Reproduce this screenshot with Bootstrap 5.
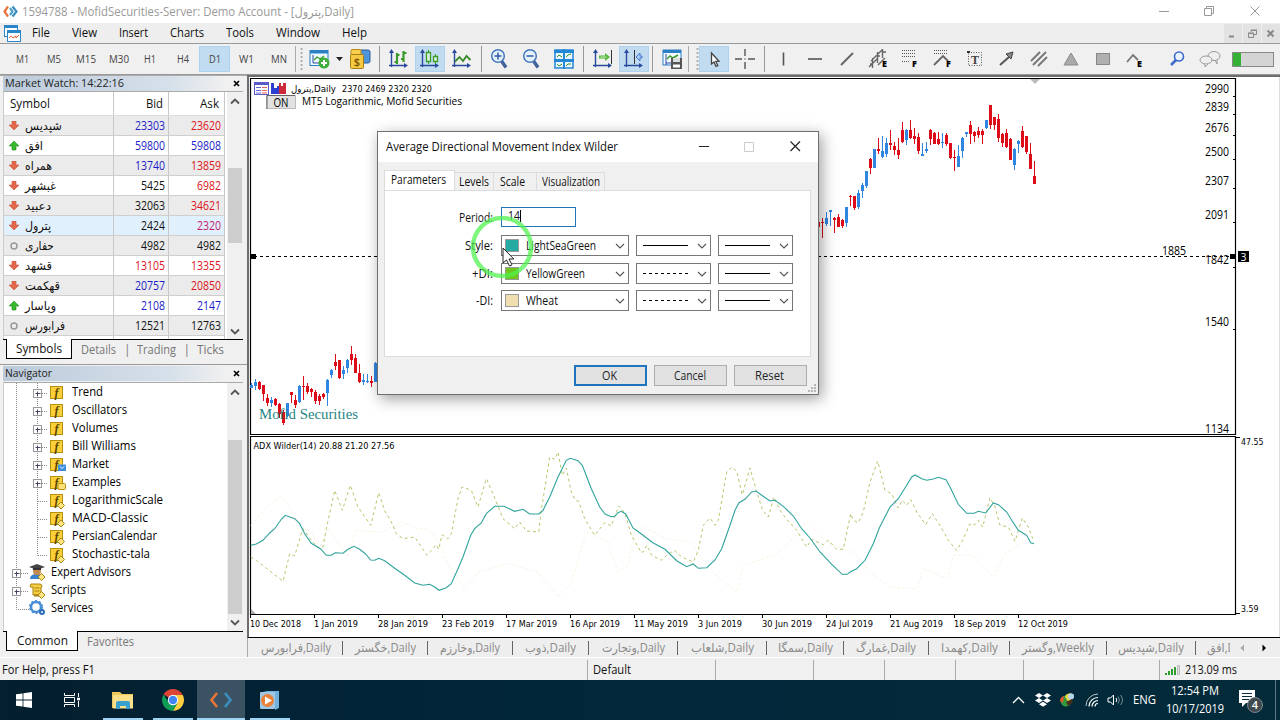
<!DOCTYPE html>
<html lang="en">
<head>
<meta charset="UTF-8" />
<meta name="viewport" content="width=device-width, initial-scale=1" />
<title>MetaTrader 5</title>
<link href="https://cdn.jsdelivr.net/npm/bootstrap@5.3.0/dist/css/bootstrap.min.css" rel="stylesheet" />
<style>
  body {
    width: 1280px;
    height: 720px;
    overflow: hidden;
    background: #f0f0f0;
    color: #111;
    font-family: "Open Sans", "Noto Sans", "DejaVu Sans", sans-serif;
    font-size: 12px;
    line-height: 16px;
  }
  svg { display: block; flex: none; }
  .fit { display: inline-block; white-space: nowrap; transform-origin: 0 50%; flex: none; }
  .flex-none { flex: none; }

  .title-bar { height: 23px; background: #fff; color: #999; padding-left: 3px; }
  .menu-bar { height: 21px; background: #eee; border-bottom: 1px solid #9a9a9a; padding-left: 4px; }
  .menu-bar .menus { gap: 22px; margin-left: 11px; }
  .mdi-btn { width: 18px; height: 19px; background: #e2e2e2; margin-left: 1px; }
  .tool-bar { height: 31px; background: #f0f0f0; border-bottom: 1px solid #999; padding-left: 7px; position: relative; }
  .tool { height: 26px; color: #444; font-size: 11px; flex: none; }
  .tool svg { overflow: visible; }
  .tool.on { background: #c1dcf0; border: 1px solid #add2ee; }
  .tool-sep { height: 26px; flex: none; }
  .grip { width: 3px; height: 24px; background: radial-gradient(circle, #aaa 1px, transparent 1.2px) 0 0 / 3px 4px; }
  .gauge { width: 42px; height: 15px; border: 1px solid #888; background: #d4d4d4; }
  .gauge div { width: 8px; height: 100%; background: #35b135; }

  .side { width: 247px; padding: 0 4px 0 3px; border-top: 1px solid #aaa; }
  .dock-title { height: 15px; padding: 0 3px 1px 2px; background: linear-gradient(90deg, #bccada, #d6e0ea 70%, #f0f0f0 93%); color: #222; font-size: 11px; }
  .watch { height: 248px; border-top: 1px solid #aaa; border-left: 1px solid #ccc; background: #fff; overflow: hidden; }
  .watch .quote { height: 20px; border-bottom: 1px solid #cfcfcf; }
  .watch .head { height: 24px; border-bottom: 1px solid #ddd; }
  .watch .quote:nth-child(even) { background: #ebebeb; }
  .watch .quote.picked { background: #e1f0fd; }
  .c-sym { width: 110px; border-right: 1px solid #c8c8c8; padding-left: 4px; }
  .c-bid { width: 55px; border-right: 1px solid #c8c8c8; padding-right: 3px; justify-content: flex-end; }
  .c-ask { width: 56px; border-right: 1px solid #c8c8c8; padding-right: 3px; justify-content: flex-end; }
  .fa-text { font-family: "DejaVu Sans", sans-serif; font-size: 12px; }
  .up { color: #1c1cc8; }
  .down { color: #dc1420; }
  .pink { color: #c01c6c; }
  .scroller { width: 16px; background: #f0f0f0; }
  .scroller .thumb { width: 14px; background: #cdcdcd; }
  .dock-tabs { height: 24px; border-top: 1px solid #000; color: #777; }
  .dock-tabs .on { height: 20px; background: #fff; color: #111; border: 1px solid #000; border-top: 0; margin-top: -1px; }
  .tree { height: 249px; border-left: 1px solid #ccc; background: #fff; overflow: hidden; margin-top: 1px; }

  .chart-area { border-left: 2px solid #6d6d6d; border-top: 2px solid #6d6d6d; background: #fff; }
  .chart-tabs { height: 20px; border-top: 1px solid #000; background: #eee; border-left: 1px solid #aaa; color: #8a8a8a; }
  .chart-tabs .sheet { height: 14px; border-right: 1px solid #666; flex: none; }
  .status { height: 23px; border-top: 1px solid #fff; background: #f0f0f0; padding-top: 1px; }
  .status .cell { height: 20px; border-left: 1px solid #aaa; flex: none; padding-left: 5px; }

  .task-bar { height: 40px; background: linear-gradient(90deg, #041f2e, #02253a 35%, #032b3a); color: #fff; }
  .task { height: 40px; flex: none; position: relative; }
  .task.on { background: #3a5262; }
  .task .line { position: absolute; bottom: 0; height: 2px; width: 40px; left: 50%; margin-left: -20px; background: #9ed3f3; }
  .task.on .line { width: 48px; margin-left: -24px; }

  .dialog-box { position: absolute; left: 377px; top: 131px; width: 442px; height: 264px; background: #f0f0f0; border: 1px solid #6f6f6f; box-shadow: 3px 4px 14px rgba(0, 0, 0, .38); }
  .dialog-title { height: 30px; background: #fff; padding-left: 8px; }
  .dialog-tabs { height: 20px; margin: 8px 0 0 6px; }
  .dialog-tabs .tab { height: 18px; border: 1px solid #dcdcdc; border-left: 0; border-bottom: 0; background: #f0f0f0; }
  .dialog-tabs .tab.on { height: 20px; background: #fff; border-left: 1px solid #dcdcdc; padding: 0 2px 2px 0; }
  .dialog-page { height: 167px; width: 427px; margin-left: 6px; background: #fff; border: 1px solid #dcdcdc; padding-top: 16px; }
  .form-line { height: 21px; margin-bottom: 7px; }
  .form-line:last-child { margin-top: -1px; }
  .lbl { width: 109px; margin-right: 7px; padding-right: 1px; display: flex; justify-content: flex-end; }
  .period { width: 75px; height: 20px; border: 1px solid #1f74b8; padding: 0 0 2px 6px; align-self: flex-start; }
  .combo { height: 21px; border: 1px solid #777; background: #fff; margin-right: 7px; padding: 0 3px 0 3px; flex: none; }
  .swatch { width: 14px; height: 13px; border: 1px solid #999; margin-right: 7px; }
  .dlg-btn { width: 73px; height: 21px; background: #e1e1e1; border: 1px solid #adadad; border-radius: 0; padding: 0 2px 0 0; font-size: 12px; line-height: 16px; display: flex; align-items: center; justify-content: center; }
  .dlg-btn.main { border: 2px solid #1f74c0; }
  .pointer { position: absolute; left: 470px; top: 215px; }
  .size-grip { position: absolute; right: 1px; bottom: 1px; }
</style>
</head>
<body class="d-flex flex-column">

<div class="title-bar d-flex align-items-center">
  <svg width="15" height="13" viewBox="0 0 15 13" fill="none" stroke-width="2.2"><path d="M5 1.500L1.500 6.500 5 11.500" stroke="#e8743b"/><path d="M9.500 1.500L13.500 6.500 9.500 11.500" stroke="#3a8fc0"/><path d="M7 3L9.500 6.500 7 10" stroke="#55a0c8"/></svg>
  <span class="fit ms-1" data-w="332">1594788 - MofidSecurities-Server: Demo Account - [پترول,Daily]</span>
  <svg class="ms-auto" width="135" height="20" fill="none" stroke="#999"><path d="M14 9.500h10M59.500 6.500h7v7h-7zM61.500 6V4.500h7v7h-2M105.500 4.500l9 9M114.500 4.500l-9 9"/></svg>
</div>

<div class="menu-bar d-flex align-items-center">
  <svg width="17" height="17" viewBox="0 0 17 17"><rect x=".5" y=".5" width="13" height="11" fill="#fff" stroke="#2b86c9"/><path d="M0 1.500h14" stroke="#2b86c9" stroke-width="3"/><rect x="3.500" y="5.500" width="13" height="11" fill="#fff" stroke="#2b86c9"/><path d="M3 6.500h14" stroke="#2b86c9" stroke-width="3"/><path d="M5 13l2-2 2 2 3-2 0 2 3-3" fill="none" stroke="#e06030"/></svg>
  <div class="menus d-flex">
    <span class="fit" data-w="18">File</span>
    <span class="fit" data-w="25">View</span>
    <span class="fit" data-w="29">Insert</span>
    <span class="fit" data-w="34">Charts</span>
    <span class="fit" data-w="28">Tools</span>
    <span class="fit" data-w="44">Window</span>
    <span class="fit" data-w="25">Help</span>
  </div>
  <div class="d-flex ms-auto">
    <div class="mdi-btn"><svg width="18" height="19" stroke="#888" stroke-width="2"><path d="M5 12.500h5"/></svg></div>
    <div class="mdi-btn"><svg width="18" height="19" fill="none" stroke="#888"><path d="M5.500 9.500h5v4h-5zM5 9h6M8 8V6.500h5.500v4H11M8 6h6"/></svg></div>
    <div class="mdi-btn"><svg width="18" height="19" stroke="#888" stroke-width="2"><path d="M5.500 6.500l6 6M11.500 6.500l-6 6"/></svg></div>
  </div>
</div>

<div class="tool-bar d-flex align-items-center" id="toolbar"></div>

<div class="d-flex flex-none" style="height:582px">
  <div class="side flex-none">
    <div class="dock-title d-flex align-items-center justify-content-between">
      <span class="fit" data-w="119">Market Watch: 14:22:16</span>
      <svg width="7" height="7" stroke="#000" stroke-width="1.700"><path d="M1 1l5 5M6 1L1 6"/></svg>
    </div>
    <div class="watch d-flex">
      <div id="quotes"></div>
      <div class="scroller ms-auto d-flex flex-column align-items-center">
        <svg width="14" height="76" fill="none" stroke="#555" stroke-width="1.800"><path d="M3 11.500l4-4 4 4"/></svg>
        <div class="thumb" style="height:75px"></div>
        <svg class="mt-auto" width="14" height="17" fill="none" stroke="#555" stroke-width="1.800"><path d="M3 7.500l4 4 4-4"/></svg>
      </div>
    </div>
    <div class="dock-tabs d-flex" style="padding-left:3px">
      <div class="on d-flex align-items-center justify-content-center" style="width:66px"><span class="fit" data-w="46">Symbols</span></div>
      <div class="d-flex align-items-center" style="height:19px;padding-left:9px;gap:8px">
        <span class="fit" data-w="35">Details</span><span>|</span>
        <span class="fit" data-w="39" style="margin-left:-2px">Trading</span><span>|</span>
        <span class="fit" data-w="27" style="margin-left:-1px">Ticks</span>
      </div>
    </div>
    <div style="border-top:1px solid #999;margin:1px -4px 1px -3px"></div>
    <div class="dock-title d-flex align-items-center justify-content-between">
      <span class="fit" data-w="47">Navigator</span>
      <svg width="7" height="7" stroke="#000" stroke-width="1.700"><path d="M1 1l5 5M6 1L1 6"/></svg>
    </div>
    <div class="tree d-flex" style="border-top:1px solid #aaa">
      <svg id="tree" width="221" height="248" viewBox="4 383 221 248"></svg>
      <div class="scroller ms-auto d-flex flex-column align-items-center">
        <svg width="14" height="57" fill="none" stroke="#555" stroke-width="1.800"><path d="M3 11.500l4-4 4 4"/></svg>
        <div class="thumb" style="height:174px"></div>
        <svg class="mt-auto" width="14" height="16" fill="none" stroke="#555" stroke-width="1.800"><path d="M3 5.500l4 4 4-4"/></svg>
      </div>
    </div>
    <div class="dock-tabs d-flex" style="padding-left:3px">
      <div class="on d-flex align-items-center justify-content-center" style="width:72px"><span class="fit" data-w="51">Common</span></div>
      <div class="d-flex align-items-center" style="height:19px;padding-left:9px"><span class="fit" data-w="47">Favorites</span></div>
    </div>
  </div>

  <div class="flex-none d-flex flex-column" style="width:1033px">
    <div class="chart-area">
      <svg id="chart" width="1031" height="560" viewBox="249 77 1031 560"></svg>
    </div>
    <div class="chart-tabs d-flex align-items-center" id="sheets" style="padding-left:2px"></div>
  </div>
</div>

<div class="status d-flex align-items-center flex-none">
  <div style="width:587px;padding-left:2px" class="flex-none d-flex"><span class="fit" data-w="93">For Help, press F1</span></div>
  <div class="cell d-flex align-items-center" style="width:128px"><span class="fit" data-w="38">Default</span></div>
  <div class="cell" style="width:98px"></div>
  <div class="cell" style="width:71px"></div>
  <div class="cell" style="width:71px"></div>
  <div class="cell" style="width:68px"></div>
  <div class="cell" style="width:70px"></div>
  <div class="cell" style="width:66px"></div>
  <div class="cell d-flex align-items-center">
    <svg width="15" height="12"><path d="M0 9h2v2H0zM3 7h2v4H3zM6 5h2v6H6z" fill="#2f9e2f"/><path d="M9 3h2v8H9z" fill="#2f9e2f"/><path d="M12.500 1.500h2v9h-2z" fill="#ddd" stroke="#aaa" stroke-width=".7"/></svg>
    <span class="fit" data-w="52" style="margin-left:5px">213.09 ms</span>
  </div>
</div>

<div class="task-bar d-flex align-items-center flex-none">
  <div class="task d-flex align-items-center justify-content-center" style="width:48px">
    <svg width="16" height="16" fill="#fff"><path d="M0 2.300L6.600 1.400v6.200H0zM7.400 1.300L16 0v7.600H7.400zM0 8.400h6.600v6.200L0 13.700zM7.400 8.400H16V16l-8.600-1.200z"/></svg>
  </div>
  <div class="task d-flex align-items-center justify-content-center" style="width:48px">
    <svg width="17" height="16" fill="none" stroke="#fff"><path d="M.5 1v2.500h10V1M.5 15v-2.500h10V15M.5 5.500h10v5H.5zM14.500 1v4M14.500 9v6"/><path d="M13 7h3" stroke-width="2.500"/></svg>
  </div>
  <div class="task d-flex align-items-center justify-content-center" style="width:53px">
    <svg width="22" height="19"><path d="M0 1h8l2 2h11v14H0z" fill="#f0c75a"/><path d="M1 4h20v13.500H1z" fill="#fbe08a"/><path d="M4 18v-6q0-2 2-2h10q2 0 2 2v6h-4v-3H8v3z" fill="#3aa0d0"/></svg>
    <div class="line"></div>
  </div>
  <div class="task d-flex align-items-center justify-content-center" style="width:48px">
    <svg width="22" height="22" viewBox="-11 -11 22 22"><path d="M0 0L-9.500-5.500A11 11 0 0 1 9.500-5.500Z" fill="#db4437"/><path d="M0-5H9.800A11 11 0 0 1 0 11L4.500 2.500Z" fill="#ffcd40"/><path d="M-9.500-5.500A11 11 0 0 0 0 11L4.500 2.500-4 3Z" fill="#0f9d58"/><circle r="5.200" fill="#fff"/><circle r="4.200" fill="#4285f4"/></svg>
    <div class="line"></div>
  </div>
  <div class="task on d-flex align-items-center justify-content-center" style="width:48px">
    <svg width="24" height="18" fill="none" stroke-width="2.600"><path d="M8 2L2.500 9 8 16" stroke="#e8743b"/><path d="M16 2l5.500 7L16 16" stroke="#3a8fc0"/></svg>
    <div class="line"></div>
  </div>
  <div class="task d-flex align-items-center justify-content-center" style="width:49px">
    <svg width="21" height="19"><path d="M4 0h16v17l-4 2V3z" fill="#6fb0dc"/><rect x="1" y="1" width="15" height="17" rx="1" fill="#9fc7e3"/><circle cx="8.500" cy="9.500" r="6.500" fill="#e9813a"/><path d="M6 5.500l7 4-7 4z" fill="#fff"/></svg>
    <div class="line"></div>
  </div>
  <div class="ms-auto d-flex align-items-center" style="width:274px">
    <div class="d-flex justify-content-center flex-none" style="width:24px"><svg width="13" height="8" fill="none" stroke="#fff" stroke-width="1.300"><path d="M1 7l5.500-5.500L12 7"/></svg></div>
    <div class="d-flex justify-content-center flex-none" style="width:26px"><svg width="16" height="14" fill="#fff"><path d="M4 0l4 2.500L4 5 0 2.500zM12 0l4 2.500L12 5 8 2.500zM4 5l4 2.500L4 10 0 7.500zM12 5l4 2.500-4 2.500-4-2.500zM8 8.800l4 2.400L8 13.700l-4-2.500z"/></svg></div>
    <div class="d-flex justify-content-center flex-none" style="width:24px"><svg width="16" height="14"><circle cx="6" cy="8" r="5.500" fill="#2e9a3c"/><path d="M5 4a5 4 0 0 1 9-2l-5 8z" fill="#e8d545"/><circle cx="11" cy="3.500" r="3" fill="#b7d6ee"/><path d="M6 9l6-3 1 3-5 4z" fill="#4a2c1a"/><path d="M0 8q0-4 4-5L3 10z" fill="#e0562e"/></svg></div>
    <div class="d-flex justify-content-center flex-none" style="width:24px"><svg width="14" height="14" fill="none" stroke="#fff"><path d="M1 13A12 12 0 0 1 13 1" opacity=".7"/><path d="M4 13.500A9 9 0 0 1 13 4.500M7 13.500A6 6 0 0 1 13 7.500M10 13.500a3 3 0 0 1 3-3" stroke-width="1.200"/></svg></div>
    <div class="d-flex justify-content-center flex-none" style="width:22px"><svg width="17" height="12" fill="none" stroke="#fff"><path d="M1 4h2.500L6.500 1v10L3.500 8H1zM9 4q1.500 2 0 4"/><path d="M11 2.500q3 3.500 0 7M13.500 1q4 5 0 10" opacity=".45"/></svg></div>
    <div class="flex-none d-flex justify-content-center" style="width:37px"><span class="fit" data-w="23">ENG</span></div>
    <div class="flex-none d-flex flex-column align-items-center" style="width:64px;line-height:18px">
      <span class="fit" data-w="48">12:54 PM</span>
      <span class="fit" data-w="58">10/17/2019</span>
    </div>
    <div class="flex-none" style="width:48px;padding-left:11px">
      <svg width="26" height="26"><path d="M1 3h16v13H8l-4 4v-4H1z" fill="#fff"/><path d="M4 6.500h10M4 9.500h10M4 12.500h7" stroke="#0b2c3c"/><circle cx="17" cy="18" r="7.500" fill="#3f4a50" stroke="#7b868c"/><text x="17" y="22" font-size="11" font-weight="600" fill="#fff" text-anchor="middle">4</text></svg>
    </div>
    <div style="height:40px;border-left:1px solid #5f7a86"></div>
  </div>
</div>

<div class="dialog-box">
  <div class="dialog-title d-flex align-items-center">
    <span class="fit" data-w="232">Average Directional Movement Index Wilder</span>
    <svg class="ms-auto" width="137" height="28" fill="none"><path d="M18 13.500h10" stroke="#222"/><path d="M63.500 9.500h9v9h-9z" stroke="#ccc"/><path d="M109.500 8.500l9.500 9.500M119 8.500l-9.500 9.500" stroke="#222" stroke-width="1.200"/></svg>
  </div>
  <div class="dialog-tabs d-flex align-items-end">
    <div class="tab on d-flex align-items-center justify-content-center" style="width:71px"><span class="fit" data-w="55">Parameters</span></div>
    <div class="tab d-flex align-items-center justify-content-center" style="width:39px"><span class="fit" data-w="30">Levels</span></div>
    <div class="tab d-flex align-items-center" style="width:43px;padding-left:6px"><span class="fit" data-w="25">Scale</span></div>
    <div class="tab d-flex align-items-center justify-content-center" style="width:68px"><span class="fit" data-w="58">Visualization</span></div>
  </div>
  <div class="dialog-page" id="params">
    <div class="form-line d-flex align-items-center">
      <div class="lbl"><span class="fit" data-w="34">Period:</span></div>
      <div class="period d-flex align-items-center"><span class="fit" data-w="12">14</span><div style="width:1px;height:12px;background:#000"></div></div>
    </div>
  </div>
  <div class="d-flex justify-content-end" style="gap:7px;padding:8px 11px 0 0">
    <button class="btn dlg-btn main"><span class="fit" data-w="15">OK</span></button>
    <button class="btn dlg-btn"><span class="fit" data-w="32">Cancel</span></button>
    <button class="btn dlg-btn"><span class="fit" data-w="29">Reset</span></button>
  </div>
  <svg class="size-grip" width="9" height="9" fill="#b5b5b5"><path d="M6 0h2v2H6zM3 3h2v2H3zM6 3h2v2H6zM0 6h2v2H0zM3 6h2v2H3zM6 6h2v2H6z"/></svg>
</div>

<!-- click highlight and mouse pointer -->
<svg class="pointer" width="66" height="66"><circle cx="32" cy="32" r="29" fill="none" stroke="#4cf34c" stroke-opacity=".72" stroke-width="4.500"/><path d="M33 33v15l3.500-3 3 6 2.500-1.200-3-5.800h4.800z" fill="#fff" stroke="#222"/></svg>

<script src="https://cdn.jsdelivr.net/npm/bootstrap@5.3.0/dist/js/bootstrap.bundle.min.js"></script>
<script>
  const axes = '<path d="M2.500 2v16M0 16.500h17" stroke="#2a4a9e" stroke-width="1.400"/><path d="M2.500 0L0 4h5zM19 16.500l-4-2.500v5z" fill="#2a4a9e"/>';
  const icons = {
    newchart: '<rect x="1" y="1.500" width="18" height="15" fill="#eef8ff" stroke="#2b7fc4"/><path d="M1 3h18" stroke="#2b7fc4" stroke-width="3"/><path d="M4 14V6M4 14h12" stroke="#2a4a9e"/><path d="M5 11l3-3 3 2 4-3" fill="none" stroke="#3a9a2a" stroke-width="1.300"/><circle cx="15" cy="14" r="5.500" fill="#3fae3a"/><path d="M15 11v6M12 14h6" stroke="#fff" stroke-width="2"/>',
    accounts: '<rect x="7" y="1" width="13" height="13" rx="2" fill="#4f95d8" stroke="#2a5f9e"/><rect x="1" y="0.500" width="10" height="6" rx="1" fill="#f7cf4d" stroke="#b98a14"/><rect x="0.500" y="5.500" width="13" height="14" rx="1" fill="#f5c944" stroke="#a87d12"/><text x="7" y="16.500" font-size="11" font-weight="600" fill="#7a5300" text-anchor="middle">$</text>',
    bars: axes + '<path d="M8 4v11M5.500 13H8M8 6h2.500M14.500 2v11M12 10h2.500M14.500 4h3" stroke="#3a9a2a" stroke-width="2.200"/>',
    candles: axes + '<path d="M8.500 1v14M15.500 5v10" stroke="#3a9a2a"/><path d="M6.500 3.500h4v9h-4zM13.500 7.500h4v5h-4z" fill="#dff3e0" stroke="#3a9a2a" stroke-width="1.300"/>',
    line: axes + '<path d="M3 12.500L7.500 8l3.500 4L14.500 7l4 4" fill="none" stroke="#3a8a2a" stroke-width="1.800"/>',
    zoomin: '<path d="M11.500 12l4.500 6.500" stroke="#44629c" stroke-width="3.400"/><circle cx="8" cy="7" r="6.300" fill="#e4f1fb" stroke="#4477bd" stroke-width="1.500"/><path d="M8 3.500v7M4.500 7h7" stroke="#2c5ca8" stroke-width="1.500"/>',
    zoomout: '<path d="M11.500 12l4.500 6.500" stroke="#44629c" stroke-width="3.400"/><circle cx="8" cy="7" r="6.300" fill="#e4f1fb" stroke="#4477bd" stroke-width="1.500"/><path d="M4.500 7h7" stroke="#2c5ca8" stroke-width="1.500"/>',
    tile: '<path d="M1 1h18v18H1z" fill="#e8f6ff" stroke="#2387d6" stroke-width="1.500"/><path d="M0 2.500h20M0 11.500h20" stroke="#2387d6" stroke-width="3"/><path d="M10 0v20" stroke="#2387d6" stroke-width="2"/><path d="M3 8l2-2 3 2M12 8l2-2 3-1M3 15l2 2 3-2M12 17l2-2 3 0" fill="none" stroke="#3a8a2a"/>',
    autoscroll: axes + '<path d="M18.500 1v14" stroke="#333"/><path d="M6 6.500h6V4l5 4-5 4V9.500H6z" fill="#55b83e"/><path d="M7.500 8h6" stroke="#c9f0b8"/>',
    shift: axes + '<path d="M10.500 1v14" stroke="#333"/><path d="M18 7h-2V4l-4 4 4 4V9h2z" fill="#a9c8f4" stroke="#3366c8" stroke-width=".8"/>',
    template: '<rect x="1" y="1" width="18" height="15" fill="#f4faff" stroke="#2b7fc4"/><path d="M1 2.500h18" stroke="#2b7fc4" stroke-width="3"/><path d="M4 5v11M4 14h6" stroke="#2a4a9e"/><path d="M5 10l3-3 3 2 5-3" fill="none" stroke="#3a9a2a" stroke-width="1.500"/><path d="M9 9h11v11H9z" fill="#555"/><path d="M11 9h7v4h-7z" fill="#ddd"/><path d="M11 15.500h7v3h-7z" fill="#fff"/>',
    cursor: '<path d="M7.500 4v11l2.500-2 2 4.500 1.800-.8-2-4.300 3.200-.2z" fill="#fff" stroke="#444" stroke-width="1.300"/>',
    cross: '<path d="M10 0v7M10 13v7M0 10h7M13 10h7M9.500 10h1" stroke="#555" stroke-width="1.400"/>',
    vline: '<path d="M9.500 3.500v13" stroke="#555" stroke-width="1.600"/>',
    hline: '<path d="M3 10h14" stroke="#555" stroke-width="1.600"/>',
    trend: '<path d="M4 16L16 4" stroke="#666" stroke-width="1.900"/>',
    equi: '<path d="M0 18L9 9M2 12L13 1M9 16l7-7M3.500 19V9M8.500 14V3M13.500 9V0M1 15h3M8 7h3M13 3h4" stroke="#666" stroke-width="1.400"/><text x="13" y="18" font-size="9" font-weight="800" fill="#000">E</text>',
    fibo: '<path d="M1 1.500h14M1 4.500h14M1 7.500h14M1 12.500h8" stroke="#555" stroke-dasharray="1 1"/><text x="11" y="18" font-size="9" font-weight="800" fill="#000">F</text>',
    fiboarrow: '<path d="M1 1.500h14M1 4.500h14" stroke="#555" stroke-dasharray="1 1"/><path d="M1 16L10 7l5 5" fill="none" stroke="#666" stroke-width="1.800"/><text x="13" y="18" font-size="9" font-weight="800" fill="#000">F</text>',
    text: '<path d="M3.500 3.500h13v13h-13z" fill="none" stroke="#555" stroke-dasharray="1 1.500"/><path d="M2 2h3v2H2z" fill="#333"/><text x="10" y="14.500" font-size="12" font-family="Liberation Serif, serif" font-weight="700" fill="#444" text-anchor="middle">T</text>',
    arrow: '<path d="M3 16l9-8" stroke="#555" stroke-width="2"/><path d="M9 5l7-2-2 7-2-2z" fill="#888" stroke="#444"/>',
    channels: '<path d="M2 12L11 3M4 16L17 3M9 17l9-9" stroke="#777" stroke-width="1.900"/>',
    tri: '<path d="M10 4l7 12H3z" fill="#aaa" stroke="#888"/>',
    rect: '<rect x="3.500" y="4.500" width="13" height="11" fill="#b0b0b0" stroke="#888"/>',
    elliott: '<path d="M2 13L8 6l5 5" fill="none" stroke="#777" stroke-width="1.800"/><text x="12" y="18" font-size="9" font-weight="800" fill="#000">E</text>',
    search: '<circle cx="12" cy="7.500" r="4.500" fill="#eaf3ff" stroke="#3b68cc" stroke-width="1.600"/><path d="M9 11l-5 5" stroke="#3b68cc" stroke-width="2.500"/>',
    chat: '<ellipse cx="14" cy="7" rx="6" ry="4.500" fill="#eee" stroke="#999"/><path d="M15 11l2 4 0-5" fill="#eee" stroke="#999"/><ellipse cx="6" cy="11" rx="6" ry="4" fill="#eee" stroke="#999"/><path d="M5 15l0 3 3-3" fill="#eee" stroke="#999"/>'
  };
  const svg = (name) => `<svg width="20" height="20" viewBox="0 0 20 20">${icons[name]}</svg>`;

  // [name, cell width]: "|" separator, ":" separator with grip, "t:" text button, "*" pressed
  const tools = [
    ['t:M1', 31, 13], ['t:M5', 31, 14], ['t:M15', 34, 20], ['t:M30', 31, 20], ['t:H1', 32, 12], ['t:H4', 33, 12], ['*t:D1', 31, 12], ['t:W1', 32, 15], ['t:MN', 33, 16],
    [':', 8], ['newchart', 32], ['v', 8], ['accounts', 33], ['|', 7], ['bars', 32], ['*candles', 30], ['line', 33], ['|', 6],
    ['zoomin', 32], ['zoomout', 32], ['tile', 32], ['|', 6], ['autoscroll', 33], ['*shift', 30], ['|', 7], ['template', 32],
    [':', 11], ['*cursor', 30], ['cross', 32], ['|', 7], ['vline', 31], ['hline', 32], ['trend', 32], ['equi', 32], ['fibo', 32],
    ['fiboarrow', 32], ['text', 32], ['arrow', 32], ['channels', 32], ['tri', 32], ['rect', 32], ['elliott', 32], ['', 10], ['search', 32], ['chat', 34]
  ];
  const toolbar = document.getElementById('toolbar');
  tools.forEach(([name, w, tw]) => {
    const el = document.createElement('div');
    el.style.width = w + 'px';
    el.className = 'tool d-flex align-items-center justify-content-center';
    if (name[0] === '*') { el.classList.add('on'); name = name.slice(1); }
    if (name === '|') el.innerHTML = '<div class="tool-sep" style="border-left:1px solid #999"></div>';
    else if (name === ':') { el.classList.replace('justify-content-center', 'justify-content-between'); el.innerHTML = '<div class="tool-sep" style="border-left:1px solid #aaa"></div><div class="grip"></div>'; }
    else if (name === 'v') el.innerHTML = '<svg width="7" height="4"><path d="M0 0h7L3.500 4z" fill="#222"/></svg>';
    else if (name.startsWith('t:')) el.innerHTML = `<span class="fit" data-w="${tw}">${name.slice(2)}</span>`;
    else if (name) el.innerHTML = svg(name);
    toolbar.appendChild(el);
  });
  toolbar.insertAdjacentHTML('beforeend', '<div class="gauge" style="margin-left:5px"><div></div></div>');

  // Market watch
  const quotes = [
    ['شپدیس', 23303, 23620, 'd', 'up', 'down', 37], ['افق', 59800, 59808, 'u', 'up', 'up', 18], ['همراه', 13740, 13859, 'd', 'up', 'down', 27],
    ['غبشهر', 5425, 6982, 'd', '', 'down', 31], ['دعبید', 32063, 34621, 'd', '', 'down', 26], ['پترول', 2424, 2320, 'd', '', 'pink', 26],
    ['حفاری', 4982, 4982, 'n', '', '', 29], ['قشهد', 13105, 13355, 'd', 'down', 'down', 27], ['قهکمت', 20757, 20850, 'd', 'up', 'down', 35],
    ['وپاسار', 2108, 2147, 'u', 'up', 'up', 31], ['فرابورس', 12521, 12763, 'n', '', '', 40]
  ];
  const marks = {
    d: '<path d="M3 0h4v4h3L5 9 0 4h3z" fill="#e2684a" stroke="#c8533b" stroke-width=".6"/>',
    u: '<path d="M3 9h4V5h3L5 0 0 5h3z" fill="#38b82c" stroke="#1e8a18" stroke-width=".6"/>',
    n: '<circle cx="5" cy="5" r="3" fill="none" stroke="#999" stroke-width="1.500"/>'
  };
  let html = `<div class="head d-flex"><div class="c-sym d-flex align-items-center" style="padding-left:6px"><span class="fit" data-w="40">Symbol</span></div>
    <div class="c-bid d-flex align-items-center" style="padding-right:5px"><span class="fit" data-w="17">Bid</span></div>
    <div class="c-ask d-flex align-items-center" style="padding-right:5px"><span class="fit" data-w="19">Ask</span></div></div>`;
  quotes.forEach(([name, bid, ask, mark, bc, ac, w]) => {
    const nw = (n) => n > 9999 ? 30 : 24;
    html += `<div class="quote d-flex ${name === 'پترول' ? 'picked' : ''}">
      <div class="c-sym d-flex align-items-center"><svg width="17" height="10" viewBox="-1 0 17 10">${marks[mark]}</svg><span class="fit fa-text" data-w="${w}">${name}</span></div>
      <div class="c-bid d-flex align-items-center ${bc}"><span class="fit" data-w="${nw(bid)}">${bid}</span></div>
      <div class="c-ask d-flex align-items-center ${ac}"><span class="fit" data-w="${nw(ask)}">${ask}</span></div></div>`;
  });
  document.getElementById('quotes').innerHTML = html + '<div class="quote d-flex"><div class="c-sym"></div><div class="c-bid"></div><div class="c-ask"></div></div>';

  const label = (t, x, y, w, size = 12, extra = '') =>
    `<text x="${x}" y="${y}" font-size="${size}" textLength="${w}" lengthAdjust="spacingAndGlyphs" ${extra}>${t}</text>`;
  const tiny = (t, x, y, w) => label(t, x, y, w, 9.5, 'font-family="DejaVu Sans, sans-serif"');

  // Navigator tree
  const nodes = [['Trend', 31, 1], ['Oscillators', 55, 1], ['Volumes', 46, 1], ['Bill Williams', 64, 1], ['Market', 37, 1, 'm'], ['Examples', 49, 1, 'e'],
    ['LogarithmicScale', 91, 0, 'o'], ['MACD-Classic', 76, 0, 'o'], ['PersianCalendar', 85, 0, 'o'], ['Stochastic-tala', 78, 0, 'o']];
  const plus = (x, y) => `<rect x="${x - 4}" y="${y - 4}" width="8" height="8" fill="#fff" stroke="#999"/><path d="M${x - 2} ${y}h5M${x} ${y - 2}v5" stroke="#446"/>`;
  const dia = (x, y) => `<path d="M${x} ${y - 3.500}l3.500 3.500-3.500 3.500-3.500-3.500z" fill="#ffe680" stroke="#a98412"/>`;
  let tree = '<path d="M16.500 383V609.500H29M37.500 383V555.500" fill="none" stroke="#888" stroke-dasharray="1 1"/>';
  nodes.forEach(([t, w, box, kind], i) => {
    const y = 392.500 + i * 18;
    tree += `<path d="M38 ${y + 1}h10" stroke="#888" stroke-dasharray="1 1"/>`;
    if (box) tree += plus(37.500, y + 1);
    tree += `<rect x="50.500" y="${y - 6}" width="12" height="12" fill="#f9d03a" stroke="#b8900f"/><text x="56.500" y="${y + 4}" font-size="12" font-style="italic" font-weight="700" font-family="Liberation Serif, serif" text-anchor="middle" fill="#5a4300">f</text>`;
    if (kind === 'o') tree += dia(61, y + 5);
    if (kind === 'm') tree += `<rect x="58" y="${y}" width="8" height="6.500" fill="#3c8fe0"/><path d="M60 ${y + 2}l2 2 2-2" stroke="#fff" fill="none"/>`;
    if (kind === 'e') tree += `<rect x="58" y="${y + 1}" width="7.500" height="6" rx="1" fill="#ffe37a" stroke="#b8900f"/>`;
    tree += label(t, 72, y + 3.500, w);
  });
  tree += plus(16.500, 573.500) + plus(16.500, 591.500) + '<path d="M21 573.500h7M21 591.500h7" stroke="#888" stroke-dasharray="1 1"/>';
  tree += '<path d="M30 579q0-5 7-5 6 0 6 5z" fill="#3b7fd0"/><circle cx="37" cy="571" r="4" fill="#c58a50"/><path d="M29 567l8-3 8 3-8 3z" fill="#444"/><path d="M33 568h8v2h-8z" fill="#333"/>' + dia(41.500, 577);
  tree += '<path d="M31 584h9q2 0 2 3h-1v8H33v-8q-3 1-3-1z" fill="#f6cf45" stroke="#a98412"/><path d="M34 595.500h8" stroke="#a98412" stroke-width="2"/><path d="M34.500 588h5M34.500 591h5" stroke="#a98412"/>' + dia(41.500, 595);
  tree += '<circle cx="36" cy="607" r="5" fill="none" stroke="#4a8ed6" stroke-width="2.500"/><circle cx="36" cy="607" r="6.300" fill="none" stroke="#4a8ed6" stroke-width="1.500" stroke-dasharray="2 2"/><circle cx="42" cy="612" r="2" fill="none" stroke="#2f6fb8" stroke-width="2"/>';
  tree += label('Expert Advisors', 51, 576, 80) + label('Scripts', 51, 594, 35) + label('Services', 51, 612, 42);
  document.getElementById('tree').innerHTML = tree;

  // Candles: [high, body top, body bottom, low, rising], one every 4 px
  const left = [[925,930,938,940,1],[912,920,932,945,1],[918,921,942,945,0],[930,930,958,977,0],[956,968,984,994,0],[965,975,985,995,1],[968,972,990,993,0],[985,988,1018,1030,0],[1005,1010,1045,1050,0],[983,985,1022,1025,1],[950,951,960,985,0],[960,976,990,998,0],[930,933,982,985,1],[903,933,936,975,0],[924,932,951,956,0],[940,943,950,965,0],[945,950,978,988,0],[958,963,978,990,0],[955,957,966,972,0],[913,915,955,993,1],[883,885,900,908,1],[836,860,872,885,0],[855,856,910,913,0],[873,885,898,912,1],[852,855,880,893,1],[812,838,855,870,0],[836,850,893,895,0],[868,893,922,925,0],[896,915,922,930,1],[898,918,922,925,1],[903,918,923,937,0],[862,865,920,922,1]];
  const right = [[430,440,455,470,0],[428,440,444,488,0],[410,430,447,452,1],[404,406,410,452,1],[425,428,434,474,0],[416,425,455,456,0],[432,436,454,460,0],[395,397,443,455,1],[360,362,366,393,0],[362,363,398,405,0],[346,353,396,402,1],[325,330,347,370,1],[288,289,332,340,1],[250,252,279,296,0],[221,223,278,279,1],[188,222,229,238,0],[182,228,245,249,1],[190,205,236,245,1],[166,205,209,226,0],[200,212,226,240,0],[188,226,240,252,0],[140,165,200,203,0],[163,165,194,210,1],[135,165,190,193,0],[160,183,191,207,0],[175,186,228,237,0],[205,236,242,243,1],[200,222,228,235,1],[163,165,192,210,0],[172,174,206,207,0],[170,193,208,210,0],[174,202,205,218,1],[175,180,207,212,0],[203,205,250,252,0],[225,246,250,287,0],[210,243,275,276,1],[186,190,228,250,1],[170,172,177,185,1],[138,150,177,206,0],[168,171,183,200,0],[155,168,180,188,0],[162,168,180,206,0],[134,136,158,162,1],[90,90,150,163,0],[125,127,150,165,0],[118,132,190,200,0],[175,178,204,217,0],[162,175,216,218,0],[190,192,254,255,0],[220,222,269,285,1],[195,198,208,235,1],[153,168,216,218,0],[182,184,230,238,0],[205,237,281,282,0],[258,303,326,326,0]];
  const Y = (v) => Math.round(75 + v / 3);
  function candles(list, x0) {
    return list.map(([h, t, b, l, up], i) => {
      const x = x0 + i * 4, c = up ? '#2f86e0' : '#dc0c18';
      return `<path d="M${x + .5} ${Y(h)}V${Y(l)}" stroke="${c}"/><rect x="${x - 1}" y="${Y(t)}" width="3" height="${Math.max(Y(b) - Y(t), 1)}" fill="${c}"/>`;
    }).join('');
  }

  // Indicator curves, points in thirds of a pixel for two halves of the window
  const adx = [[8,340,25,336,45,325,65,303,80,290,100,262,112,250,140,260,155,275,170,305,190,334,218,351,235,370,250,370,262,362,285,364,300,352,318,343,335,352,352,365,368,384,380,385,392,379,410,386,440,409,470,430,500,453,525,460,545,457,560,465,573,475,595,467,610,455,630,410,645,375,668,310,680,290,700,273,715,245,740,223,768,223,800,238,825,232,845,246,872,246,885,235,905,195,930,135,955,85,967,79,990,86,1003,100,1030,170,1055,225,1072,247,1090,254,1100,253,1110,242,1120,238,1133,246,1155,288,1176,303],
    [0,303,40,333,75,352,110,386,140,404,160,396,175,409,200,407,225,384,245,350,270,280,285,235,297,212,315,202,335,180,348,177,365,190,390,207,405,205,430,223,460,252,485,290,510,318,540,360,575,397,607,427,622,427,630,420,650,410,675,385,700,335,718,288,750,225,775,200,800,160,815,135,825,129,845,140,860,145,880,141,895,136,918,143,930,165,955,217,980,244,1003,244,1015,238,1037,243,1060,213,1075,218,1100,240,1115,265,1135,295,1160,310,1172,332,1182,335]];
  const plus_di = [[8,375,25,385,105,448,125,365,140,372,158,310,165,290,190,325,215,350,225,345,235,290,260,175,283,235,307,160,330,225,368,280,392,182,412,240,430,270,445,305,465,320,500,315,537,370,565,338,572,352,582,308,600,320,610,305,630,200,642,165,670,175,690,225,715,140,735,185,765,260,800,290,815,270,835,297,872,300,880,235,905,75,920,82,930,60,943,130,955,108,970,180,982,205,992,208,1010,260,1040,310,1070,272,1090,282,1112,222,1130,242,1150,310,1176,355],
    [0,360,10,360,20,340,35,370,65,385,80,370,103,355,125,375,160,390,175,355,190,280,210,258,225,280,235,265,260,120,275,105,290,118,307,188,330,108,350,180,368,235,385,255,402,195,420,235,440,262,470,295,500,345,515,322,550,338,565,325,590,352,610,352,632,245,640,265,655,272,670,240,690,150,713,88,735,175,755,185,775,228,787,205,800,220,812,203,830,240,857,278,877,245,900,280,925,325,950,355,968,325,990,275,1005,278,1015,265,1028,285,1050,197,1065,225,1080,280,1105,285,1125,328,1147,258,1165,285,1178,320]];
  const minus_di = [[8,280,25,262,50,230,75,210,100,195,120,215,150,275,190,300,215,350,240,290,300,375,325,295,400,300,460,270,510,290,540,290,580,340,600,400,650,470,690,420,780,395,870,420,930,495,970,450,1000,350,1020,300,1080,330,1110,420,1140,400,1160,300,1176,280],
    [0,280,80,320,150,330,215,420,290,480,310,400,400,370,440,340,500,270,560,330,640,360,700,430,750,465,830,470,850,410,920,440,940,370,1000,370,1060,435,1090,370,1150,330]];
  function curve(parts, attrs) {
    const pts = [];
    parts.forEach((p, k) => {
      for (let i = 0; i < p.length; i += 2) pts.push((248 + k * 392 + p[i] / 3).toFixed(1) + ',' + (432 + p[i + 1] / 3).toFixed(1));
    });
    return `<polyline points="${pts.join(' ')}" fill="none" ${attrs}/>`;
  }

  let g = '<path d="M250.500 434.500V78.500H1235.500V434.500zM250.500 614.500V436.500H1235.500V614.500z" fill="none" stroke="#000" stroke-width="1.200"/>';
  g += '<path d="M1030 79h10l-5 5z" fill="#bbb"/><path d="M251 609l5 5h-5z" fill="#aaa"/><path d="M1279.500 77V637" stroke="#ddd"/>';
  g += candles(left, 251) + candles(right, 818);
  g += '<path d="M426 393v2" stroke="#d6121c" stroke-width="2"/>';
  g += '<path d="M254 256.500H1235" stroke="#000" stroke-dasharray="3 3"/><path d="M251 254h5v5h-5zM1230 254h5v5h-5z"/><path d="M1238 251h11v11h-11z"/>';
  g += label('3', 1240.500, 260.500, 6, 11, 'fill="#fff"');
  [[2990, 89], [2839, 107], [2676, 128], [2500, 152], [2307, 180.500], [2091, 215], [1842, 259.500], [1540, 322], [1134, 429]].forEach(([v, y]) => {
    g += label(v, 1205, y + 4, 24);
    if (v > 1134) g += `<path d="M1233 ${Math.round(y + 7) + .5}h3" stroke="#000"/>`;
  });
  g += label('1885', 1162, 255, 24);
  g += '<rect x="254.500" y="82.500" width="14" height="12" fill="#fff" stroke="#5a5ac8"/><path d="M255 84h14" stroke="#5a5ac8" stroke-width="2"/><path d="M256 87.500h5M256 90.500h5M256 93h5" stroke="#6464d8"/><path d="M262 87.500h5M262 90.500h5M262 93h5" stroke="#e86060"/>';
  g += '<path d="M271 83h3v5h3v-2h2v8h-8z" fill="#2c3fd0"/><path d="M279 83h2v3h2v-3h3v11h-7z" fill="#cc2a3a"/>';
  g += tiny('پترول,Daily', 291, 92, 45) + tiny('2370 2469 2320 2320', 342, 92, 90);
  g += '<path d="M266.500 95.500h29v13h-29z" fill="#e2e2e2" stroke="#bbb"/><path d="M267 109V95.500h28" fill="none" stroke="#666"/>' + label('ON', 273.500, 106.500, 15);
  g += label('MT5 Logarithmic, Mofid Securities', 302, 105, 160, 11.500);
  g += label('Mofid Securities', 259, 419, 99, 15, 'font-family="Liberation Serif, serif" fill="#1f8585"');
  g += curve(minus_di, 'stroke="#fbf3e4" stroke-dasharray="3 2"') + curve(plus_di, 'stroke="#b4c76c" stroke-dasharray="3 3"') + curve(adx, 'stroke="#2fa39c" stroke-width="1.100"');
  g += tiny('ADX Wilder(14) 20.88 21.20 27.56', 253.500, 449, 141);
  g += '<path d="M1236 437.500h4M1236 613.500h4" stroke="#000"/>' + tiny('47.55', 1241, 445, 22.500) + tiny('3.59', 1241, 612, 17.500);
  [['10 Dec 2018', 51], ['1 Jan 2019', 44], ['28 Jan 2019', 50], ['23 Feb 2019', 52], ['17 Mar 2019', 51], ['16 Apr 2019', 50], ['11 May 2019', 54], ['3 Jun 2019', 44], ['30 Jun 2019', 50], ['24 Jul 2019', 47], ['21 Aug 2019', 53], ['18 Sep 2019', 52], ['12 Oct 2019', 50]].forEach(([t, w], i) => {
    const x = 250 + i * 64;
    g += `<path d="M${x + .5} 614v4" stroke="#000"/>` + tiny(t, x, 627, w);
  });
  document.getElementById('chart').innerHTML = g;

  // Chart sheets: [caption, text width, cell width]
  const sheets = [['فرابورس,Daily', 70, 93], ['خگستر,Daily', 61, 85], ['وخارزم,Daily', 60, 85], ['ذوب,Daily', 51, 76], ['وتجارت,Daily', 63, 89], ['شلعاب,Daily', 63, 89], ['سمگا,Daily', 55, 77], ['غمارگ,Daily', 60, 85], ['کهمدا,Daily', 57, 81], ['وگستر,Weekly', 72, 97], ['شپدیس,Daily', 66, 89]];
  document.getElementById('sheets').innerHTML = sheets.map(([t, w, c]) =>
    `<div class="sheet d-flex align-items-center justify-content-center" style="width:${c}px"><span class="fit" data-w="${w}">${t}</span></div>`).join('') +
    '<div class="overflow-hidden flex-none" style="width:23px;margin-left:11px"><span class="fit" data-w="46">افق,Daily</span></div>' +
    '<svg width="40" height="10"><path d="M14 1.500v7L10.500 5z" fill="#aaa"/><path d="M32.500 1.500v7L36 5z" fill="#000"/></svg>';

  // Dialog rows
  const arrow = '<svg width="10" height="6" fill="none" stroke="#555" stroke-width="1.100"><path d="M1 1L5 5 9 1"/></svg>';
  const dash = (d) => `<svg width="46" height="1" style="margin-left:3px"><path d="M0 .5h45" stroke="#000" ${d ? 'stroke-dasharray="3 3"' : ''}/></svg>`;
  [['Style:', 28, '#26aaa4', 'LightSeaGreen', 70, 0], ['+DI:', 21, '#6fc71c', 'YellowGreen', 59, 1], ['-DI:', 17, '#f0deb0', 'Wheat', 32, 1]].forEach(([l, lw, c, t, w, d]) => {
    document.getElementById('params').insertAdjacentHTML('beforeend', `
      <div class="form-line d-flex align-items-center">
        <div class="lbl"><span class="fit" data-w="${lw}">${l}</span></div>
        <div class="combo d-flex align-items-center" style="width:128px"><div class="swatch" style="background:${c}"></div><span class="fit" data-w="${w}">${t}</span><span class="ms-auto">${arrow}</span></div>
        <div class="combo d-flex align-items-center justify-content-between" style="width:75px">${dash(d)}${arrow}</div>
        <div class="combo d-flex align-items-center justify-content-between" style="width:75px">${dash(0)}${arrow}</div>
      </div>`);
  });

  // Squeeze captions to the width they have in the native controls
  document.querySelectorAll('.fit').forEach(el => {
    const w = +el.dataset.w;
    const natural = el.getBoundingClientRect().width;
    el.style.width = w + 'px';
    el.style.transform = `scaleX(${w / natural})`;
  });
</script>

</body>
</html>
